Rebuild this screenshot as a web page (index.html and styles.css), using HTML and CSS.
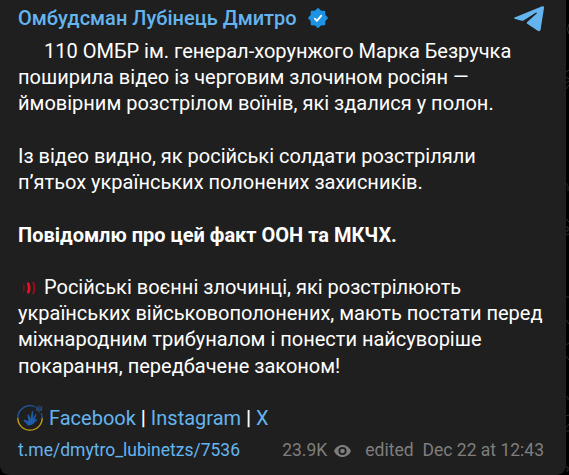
FILE: index.html
```html
<!DOCTYPE html>
<html lang="uk">
<head>
<meta charset="utf-8">
<title>Омбудсман Лубінець Дмитро</title>
<link rel="stylesheet" href="styles.css">
</head>
<body>
<article class="message">
  <header class="header">
    <a class="author">Омбудсман Лубінець Дмитро</a>
    <svg class="verified" viewBox="0 0 20 20"><path fill="#1c93e3" stroke="#1c93e3" stroke-width="1.6" stroke-linejoin="round" d="M10 .9 12.7 3.4 16.4 3.6 16.6 7.3 19.1 10 16.6 12.7 16.4 16.4 12.7 16.6 10 19.1 7.3 16.6 3.6 16.4 3.4 12.7 .9 10 3.4 7.3 3.6 3.6 7.3 3.4Z"/><path fill="none" stroke="#fff" stroke-width="1.8" stroke-linecap="round" stroke-linejoin="round" d="m6.8 10.6 2.1 2.2 4.2-5"/></svg>
    <svg class="telegram" viewBox="0 0 30 26"><path fill="#64b5ef" d="M.6 11.5 28.2.3Q30.3-.3 30 2L26.6 23.5Q26 26 23.7 24.7L13.2 17.8Q12.3 17 13.2 15.9L22.7 7.4Q23.3 6.2 21.7 6.8L9.6 14.4Q8.7 15 7.5 14.7L.6 12.7Q-.5 12.1.6 11.5Z"/></svg>
  </header>
  <div class="text">
    <p class="indent">110 ОМБР ім. генерал-хорунжого Марка Безручка<br>поширила відео із черговим злочином росіян —<br>ймовірним розстрілом воїнів, які здалися у полон.</p>
    <p>Із відео видно, як російські солдати розстріляли<br>п’ятьох українських полонених захисників.</p>
    <p><b>Повідомлю про цей факт ООН та МКЧХ.</b></p>
    <p><svg class="siren" viewBox="0 0 26 20"><g fill="none" stroke-linecap="round"><path stroke="#74131c" stroke-width="1.8" d="M5.6 7.3Q6.6 10 5.6 12.7"/><path stroke="#ed1024" stroke-width="2.6" d="M10.2 5.7Q12.2 10 10.2 14.3"/><path stroke="#930f1c" stroke-width="2" d="M15.2 4.7Q17.8 10 15.2 15.3"/></g></svg>Російські воєнні злочинці, які розстрілюють<br>українських військовополонених, мають постати перед<br>міжнародним трибуналом і понести найсуворіше<br>покарання, передбачене законом!</p>
  </div>
  <nav class="links">
    <svg class="emblem" viewBox="0 0 26 26"><g fill="none" stroke-width="1.3"><path stroke="#245696" d="M.8 13A12.2 12.2 0 0 1 18.4 2M25.2 13Q25.2 10.5 24.2 8.2"/><path stroke="#caa313" d="M.8 13a12.2 12.2 0 0 0 24.4 0"/></g><path fill="#205da8" d="M10.8 20.4Q9.5 17.4 6.5 15.9 6.4 14.5 8.2 14.7L11.4 16.2 10.6 10.2Q11.2 8.8 12.1 9.9L13.6 13.8 14.8 6.4Q15.7 5.3 16.2 6.7L15.9 13.2 18.4 9.2Q19.6 8.8 19.3 10.2L17.6 14.7 19.9 13.9Q20.9 14.2 20.1 15.1L17.4 17.4Q15.5 20.2 10.8 20.4Z"/><path fill="none" stroke="#234571" stroke-width="1.1" d="M19.6 1.2v4.2h5V.8M22 .3v8M20.7 2v4M23.4 2v4"/></svg>
    <span><a>Facebook</a> <b>|</b> <a>Instagram</a> <b>|</b> <a>X</a></span>
  </nav>
  <footer class="footer">
    <a class="permalink">t.me/dmytro_lubinetzs/7536</a>
    <span class="views">23.9K</span>
    <svg class="eye" viewBox="0 0 17 12"><path fill="#7e7e7e" fill-rule="evenodd" d="M8.5 0C4.7 0 1.6 2.4 0 6c1.6 3.6 4.7 6 8.5 6s6.9-2.4 8.5-6C15.4 2.4 12.3 0 8.5 0Zm0 1.9a4.1 4.1 0 1 1 0 8.2 4.1 4.1 0 0 1 0-8.2Z"/><circle cx="8.5" cy="6" r="2.3" fill="#7e7e7e"/></svg>
    <span class="edited">edited</span>
    <time>Dec 22 at 12:43</time>
  </footer>
</article>
<svg class="wallpaper" viewBox="0 0 3 475"><path fill="none" stroke="#343a34" stroke-width=".8" d="M3 24q-3 5 0 10M0 72l3-2M0 77l3 2M0 83l3-2M0 89l3-4M0 183q3 3 2 8M0 219l3 3M0 227h2v4h-2M0 235l3-1M0 297h3M0 320l3 4M0 345l3-2M0 356l3 4M0 396q3 1 2 4M0 416l3-1M0 428l3-4M0 431h3M0 467h2v4h-2"/></svg>
</body>
</html>
```
FILE: styles.css
```css
body {
  margin: 0;
  height: 475px;
  display: flex;
  overflow: hidden;
  background: #000;
  font-family: Roboto, sans-serif;
}
.message {
  box-sizing: border-box;
  width: 566px;
  height: 475px;
  padding: 5px 22px 0 18px;
  border-radius: 0 0 9px 9px;
  background: #1f1f1f;
  color: #fff;
  font-size: 20px;
  line-height: 26.22px;
}
.wallpaper { width: 3px; height: 475px; }
.header { display: flex; height: 33px; }
.author { font-weight: 500; color: #64b5ef; white-space: nowrap; }
.verified { width: 20px; height: 20px; margin: 3px 0 0 11px; }
.telegram { width: 30px; height: 26px; margin: 1px 0 0 auto; }
.text { white-space: nowrap; }
.text p { margin: 0 0 26.22px; }
.text .indent { text-indent: 26px; }
b { font-weight: 700; }
.siren { width: 26px; height: 20px; vertical-align: -4px; }
.links { display: flex; align-items: center; height: 26px; }
.emblem { width: 26px; height: 26px; margin: 0 6px 0 -1px; }
.links a, .permalink { color: #64b5ef; }
.footer {
  display: flex;
  align-items: center;
  margin-top: 7px;
  height: 25px;
  font-size: 17.5px;
  color: #7e7e7e;
  white-space: nowrap;
}
.views { margin-left: auto; }
.eye { width: 17px; height: 12px; margin: 0 14px 0 7px; }
.edited { margin-right: 9px; }
```
